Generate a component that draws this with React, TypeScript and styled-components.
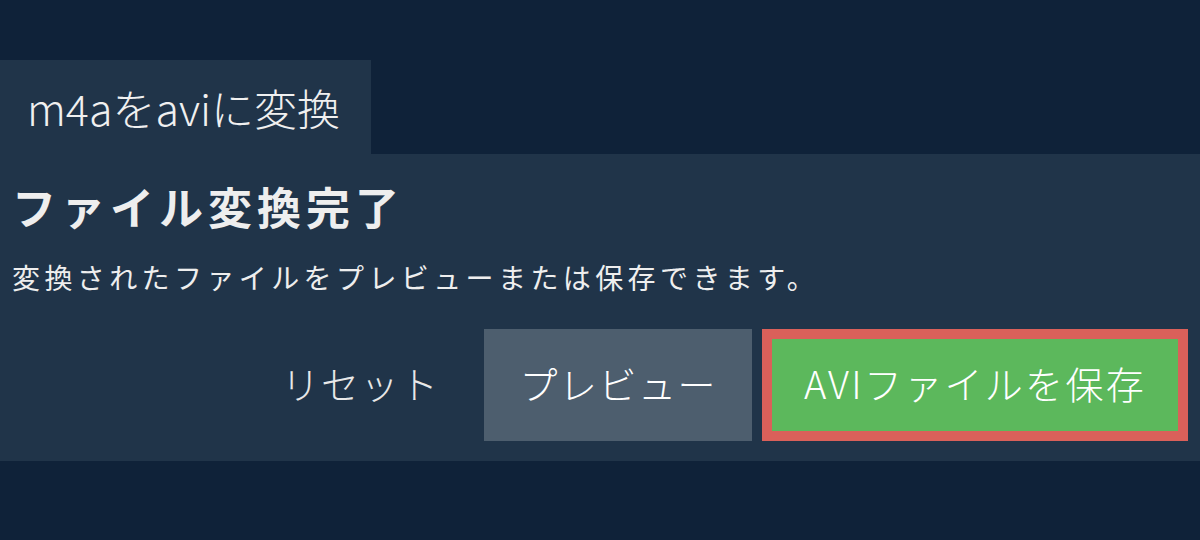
import React from "react";
import styled, { createGlobalStyle } from "styled-components";

const Global = createGlobalStyle`
  html, body { margin: 0; padding: 0; background: #0f2239; }
  body { font-family: "Noto Sans CJK JP", "Noto Sans", sans-serif; color: #eeeeee; }
  * { box-sizing: border-box; }
`;

const Page = styled.div`
  width: 1200px;
  height: 540px;
  padding-top: 60px;
  background: #0f2239;
`;

const Tab = styled.div`
  width: 371px;
  height: 94px;
  background: #203449;
  padding-left: 27px;
  font-size: 43px;
  font-weight: 300;
  line-height: 94px;
  color: #f0f0f0;
`;

const Panel = styled.div`
  background: #203449;
  height: 307px;
  padding: 22px 12px 0 12px;
  display: flex;
  flex-direction: column;
`;

const Title = styled.h1`
  margin: 0;
  font-size: 44px;
  font-weight: 700;
  line-height: 60px;
  letter-spacing: 5px;
  color: #eeeeee;
`;

const Subtitle = styled.p`
  margin: 21px 0 0;
  font-size: 28px;
  font-weight: 400;
  line-height: 40px;
  letter-spacing: 4.4px;
  color: #eeeeee;
`;

const Actions = styled.div`
  display: flex;
  justify-content: flex-end;
  gap: 10px;
  margin-top: 32px;
`;

const Button = styled.button<{ $variant: "plain" | "muted" | "primary" }>`
  height: 112px;
  padding: 0 ${(p) => (p.$variant === "primary" ? "32px" : "35px")} 6px;
  font-family: inherit;
  font-size: 38px;
  font-weight: 300;
  letter-spacing: ${(p) => (p.$variant === "primary" ? "2.3px" : "1.5px")};
  cursor: pointer;
  border: ${(p) => (p.$variant === "primary" ? "10px solid #da605a" : "none")};
  background: ${(p) =>
    p.$variant === "primary" ? "#5cb85c" : p.$variant === "muted" ? "#4d5e6e" : "transparent"};
  color: ${(p) => (p.$variant === "plain" ? "#e8e8e8" : "#ffffff")};
`;

export default function App() {
  return (
    <>
      <Global />
      <Page>
        <Tab>m4aをaviに変換</Tab>
        <Panel>
          <Title>ファイル変換完了</Title>
          <Subtitle>変換されたファイルをプレビューまたは保存できます。</Subtitle>
          <Actions>
            <Button $variant="plain">リセット</Button>
            <Button $variant="muted">プレビュー</Button>
            <Button $variant="primary">AVIファイルを保存</Button>
          </Actions>
        </Panel>
      </Page>
    </>
  );
}
